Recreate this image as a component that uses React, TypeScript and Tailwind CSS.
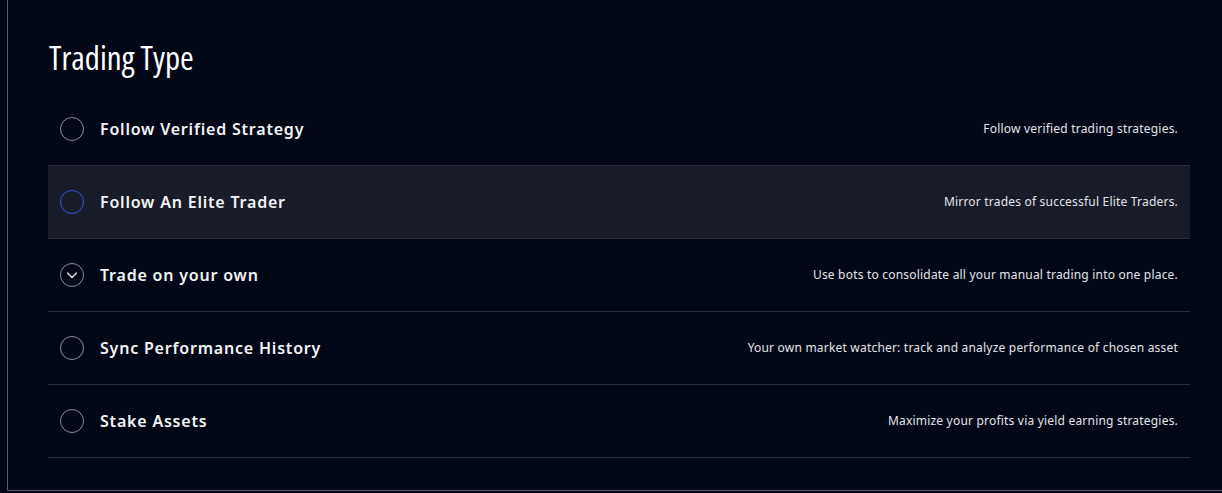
import React from "react";

type Item = { title: string; desc: string; kind: "plain" | "active" | "chevron" };

const items: Item[] = [
  { title: "Follow Verified Strategy", desc: "Follow verified trading strategies.", kind: "plain" },
  { title: "Follow An Elite Trader", desc: "Mirror trades of successful Elite Traders.", kind: "active" },
  { title: "Trade on your own", desc: "Use bots to consolidate all your manual trading into one place.", kind: "chevron" },
  { title: "Sync Performance History", desc: "Your own market watcher: track and analyze performance of chosen asset", kind: "plain" },
  { title: "Stake Assets", desc: "Maximize your profits via yield earning strategies.", kind: "plain" },
];

function Marker({ kind }: { kind: Item["kind"] }) {
  if (kind === "active") {
    return <div className="w-[24px] h-[24px] rounded-full border border-[#2f55d4]" />;
  }
  if (kind === "chevron") {
    return (
      <div className="w-[24px] h-[24px] rounded-full border border-[#8d8f96] flex items-center justify-center">
        <svg width="12" height="12" viewBox="0 0 12 12" fill="none">
          <path d="M1.5 4 L6 8.5 L10.5 4" stroke="#e6e6e6" strokeWidth="1.3" strokeLinecap="round" strokeLinejoin="round" />
        </svg>
      </div>
    );
  }
  return <div className="w-[24px] h-[24px] rounded-full border border-[#8d8f96]" />;
}

export default function App() {
  return (
    <div className="w-[1222px] h-[493px] bg-[#020716] overflow-hidden">
      <div className="ml-[7px] h-[491px] border-l border-b border-[#5a5d66] pl-[40px] pr-[32px] pt-[38px]">
        <h2
          className="text-[33px] leading-[40px] text-white font-stretch-[75%] pl-[1px]"
          style={{ fontFamily: '"Open Sans", "DejaVu Sans Condensed", sans-serif' }}
        >
          Trading Type
        </h2>
        <div className="mt-[15px]" style={{ fontFamily: '"Noto Sans", "Open Sans", sans-serif' }}>
          {items.map((it) => (
            <div
              key={it.title}
              className={`h-[73px] flex items-center border-b border-[#2a2d38] pl-[12px] pr-[12px] ${
                it.kind === "active" ? "bg-[#181c28]" : ""
              }`}
            >
              <Marker kind={it.kind} />
              <div className="ml-[16px] text-[16px] font-semibold text-[#f4f4f6] tracking-[0.8px]">{it.title}</div>
              <div className="ml-auto text-[12px] text-[#e4e4e8] tracking-[0.2px]">{it.desc}</div>
            </div>
          ))}
        </div>
      </div>
    </div>
  );
}
